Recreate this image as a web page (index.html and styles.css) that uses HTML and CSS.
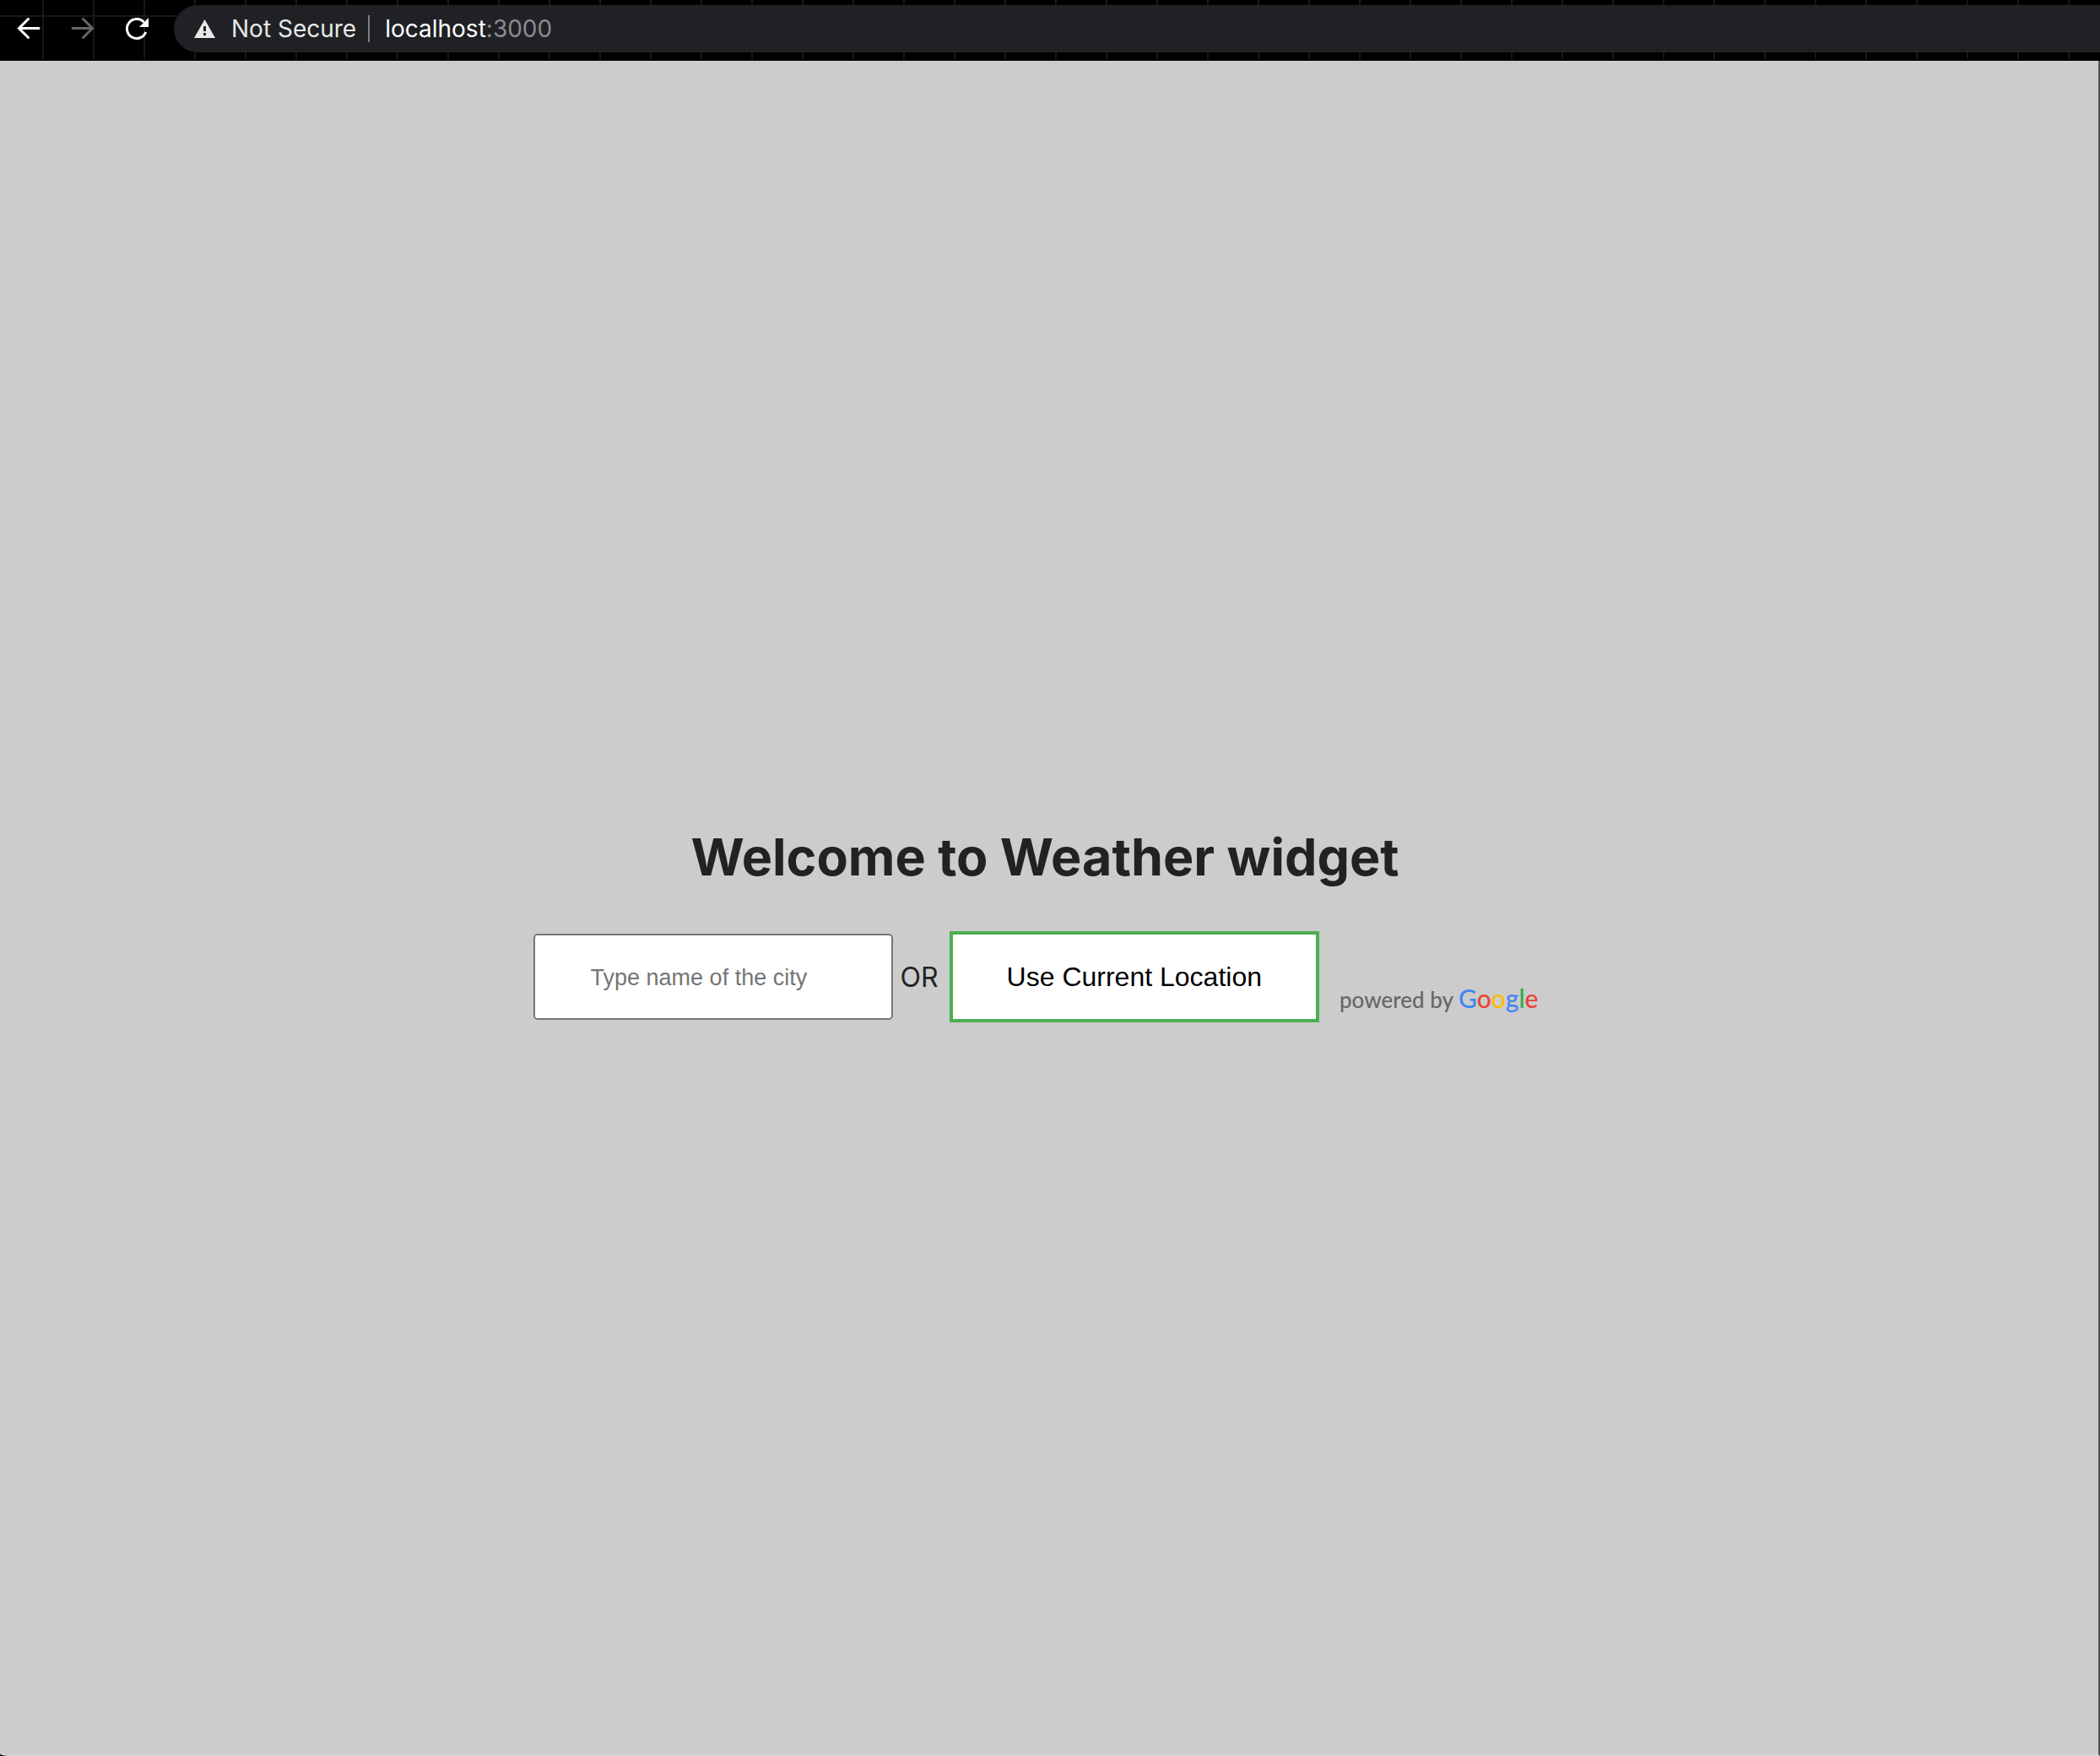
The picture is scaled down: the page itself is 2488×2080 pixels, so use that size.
FILE: index.html
```html
<!DOCTYPE html>
<html lang="en">
<head>
<meta charset="utf-8">
<title>Weather widget</title>
<link rel="stylesheet" href="styles.css">
</head>
<body>
<header class="toolbar">
  <button class="nav-button" type="button" aria-label="Back">
    <svg viewBox="0 0 28 28" width="28" height="28"><path d="M13.500 2.500 2.500 13.500 13.500 24.500M2.500 13.500H26" fill="none" stroke="#fff" stroke-width="3" stroke-linecap="round"/></svg>
  </button>
  <button class="nav-button" type="button" aria-label="Forward" disabled>
    <svg viewBox="0 0 28 28" width="28" height="28"><path d="M14.500 2.500 25.500 13.500 14.500 24.500M25.500 13.500H2" fill="none" stroke="#666" stroke-width="3" stroke-linecap="round"/></svg>
  </button>
  <button class="nav-button" type="button" aria-label="Reload">
    <svg viewBox="0 0 28 28" width="28" height="28"><path d="M24.700 18A11.500 11.500 0 1 1 22.400 6.200" fill="none" stroke="#fff" stroke-width="3"/><path d="M28 1V12H17Z" fill="#fff"/></svg>
  </button>
  <div class="address">
    <button class="security" type="button">
      <svg viewBox="0 0 25 22" width="25" height="22" aria-hidden="true"><path d="M12.500 0 25 22H0Z" fill="#e8e8e8"/><path d="M11 8h3v6h-3zM11 16h3v3h-3z" fill="#202124"/></svg>
      Not Secure
    </button>
    <div class="url">localhost<span class="port">:3000</span></div>
  </div>
</header>
<main class="page">
  <h1 class="title">Welcome to Weather widget</h1>
  <form class="search">
    <input class="city" type="text" placeholder="Type name of the city" aria-label="City">
    <span class="or">OR</span>
    <button class="locate" type="button">Use Current Location</button>
    <div class="credit">powered by <span class="brand"><span class="blue">G</span><span class="red">o</span><span class="yellow">o</span><span class="blue">g</span><span class="green">l</span><span class="red">e</span></span></div>
  </form>
</main>
</body>
</html>
```
FILE: styles.css
```css
* {
  box-sizing: border-box;
}

body {
  margin: 0;
  min-height: 100vh;
  display: flex;
  flex-direction: column;
  background: #000;
  color: #222;
  font-family: Inter, "Liberation Sans", sans-serif;
}

button {
  font: inherit;
  border: 0;
  padding: 0;
  background: none;
}

.toolbar {
  display: flex;
  align-items: center;
  gap: 24px;
  height: 72px;
  padding: 6px 0 10px 14px;
  background:
    linear-gradient(#000, #000) 0 70px / 100% 2px no-repeat,
    linear-gradient(#181818, #181818) 0 18px / 100% 2px no-repeat,
    linear-gradient(90deg, #181818 2px, transparent 2px) 50px 0 / 60px 100%,
    #000;
}

.nav-button {
  display: flex;
  align-items: center;
  justify-content: center;
  width: 40px;
  height: 56px;
}

.address {
  flex: 1;
  display: flex;
  align-items: center;
  height: 56px;
  padding-left: 24px;
  border-radius: 28px 0 0 28px;
  background: #202124;
  font-size: 28px;
}

.security {
  display: flex;
  align-items: center;
  gap: 19px;
  height: 32px;
  padding-right: 14px;
  border-right: 2px solid #808184;
  color: #e8e8e8;
}

.url {
  padding-left: 18px;
  color: #fff;
}

.port {
  color: #8b8c8e;
}

.page {
  flex: 1;
  display: flex;
  flex-direction: column;
  align-items: center;
  justify-content: center;
  gap: 50px;
  padding: 38px 10px 0 0;
  border-right: 2px solid #555;
  border-bottom: 2px solid #d6d6d6;
  border-bottom-left-radius: 10px 3px;
  background: #ccc;
}

.title {
  margin: 0;
  font-size: 61px;
  line-height: 76px;
  font-weight: 700;
}

.search {
  display: flex;
  align-items: center;
}

.city {
  width: 426px;
  height: 102px;
  padding: 2px 66px 0;
  border: 2px solid #767676;
  border-radius: 5px;
  background: #fff;
  font: 27px "Liberation Sans", Arial, sans-serif;
}

.city::placeholder {
  color: #757575;
}

.or {
  padding: 0 13px 0 9px;
  font-size: 32px;
}

.locate {
  height: 108px;
  padding: 0 64px;
  border: 4px solid #4caf50;
  background: #fff;
  color: #000;
  font: 32px "Liberation Sans", Arial, sans-serif;
}

.credit {
  align-self: flex-end;
  padding: 0 22px 7px 24px;
  color: #666;
  font: 500 26px/40px Lato, sans-serif;
}

.brand {
  font-size: 30px;
}

.blue {
  color: #4285f4;
}

.red {
  color: #ea4335;
}

.yellow {
  color: #fbbc05;
}

.green {
  color: #34a853;
}
```
